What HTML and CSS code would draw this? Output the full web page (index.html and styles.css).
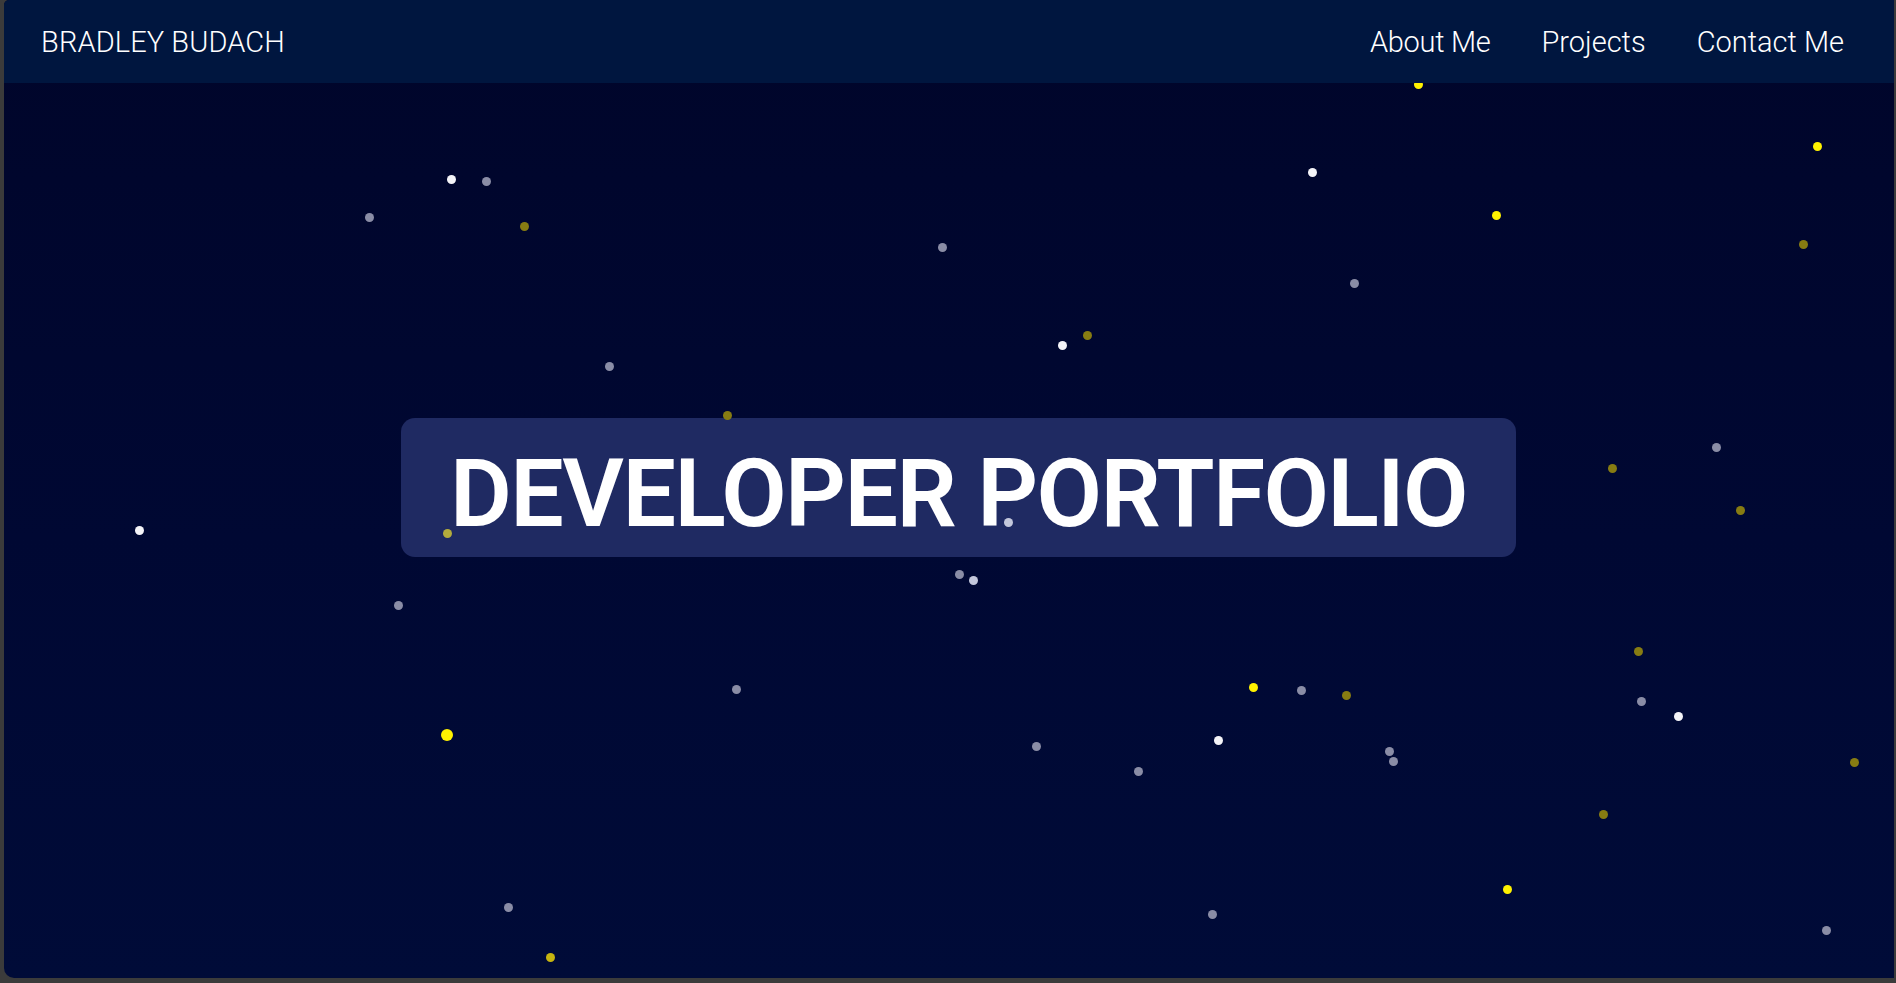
FILE: index.html
```html
<!DOCTYPE html>
<html lang="en">
<head>
<meta charset="utf-8">
<title>Bradley Budach</title>
<link rel="stylesheet" href="styles.css">
</head>
<body>
<div class="frame">
  <header class="topbar">
    <div class="brand">BRADLEY BUDACH</div>
    <nav class="nav">
      <a class="nav-link" href="#about">About Me</a>
      <a class="nav-link" href="#projects">Projects</a>
      <a class="nav-link" href="#contact">Contact Me</a>
    </nav>
  </header>
  <main class="hero">
    <div class="title-box"><h1 class="title">DEVELOPER PORTFOLIO</h1></div>
  </main>
  <div class="sky">
    <span class="star yellow" style="left:1414px;top:84px"></span>
    <span class="star yellow" style="left:1813px;top:146px"></span>
    <span class="star white" style="left:447px;top:179px"></span>
    <span class="star gray" style="left:482px;top:181px"></span>
    <span class="star gray" style="left:365px;top:217px"></span>
    <span class="star olive" style="left:520px;top:226px"></span>
    <span class="star white" style="left:1308px;top:172px"></span>
    <span class="star yellow" style="left:1492px;top:215px"></span>
    <span class="star gray" style="left:938px;top:247px"></span>
    <span class="star olive" style="left:1799px;top:244px"></span>
    <span class="star gray" style="left:1350px;top:283px"></span>
    <span class="star white" style="left:1058px;top:345px"></span>
    <span class="star olive" style="left:1083px;top:335px"></span>
    <span class="star gray" style="left:605px;top:366px"></span>
    <span class="star olive" style="left:723px;top:415px"></span>
    <span class="star gray" style="left:1712px;top:447px"></span>
    <span class="star olive" style="left:1608px;top:468px"></span>
    <span class="star olive" style="left:1736px;top:510px"></span>
    <span class="star white" style="left:135px;top:530px"></span>
    <span class="star khaki" style="left:443px;top:533px"></span>
    <span class="star pale" style="left:1004px;top:522px"></span>
    <span class="star gray" style="left:955px;top:574px"></span>
    <span class="star pale" style="left:969px;top:580px"></span>
    <span class="star gray" style="left:394px;top:605px"></span>
    <span class="star olive" style="left:1634px;top:651px"></span>
    <span class="star gray" style="left:732px;top:689px"></span>
    <span class="star yellow" style="left:1249px;top:687px"></span>
    <span class="star gray" style="left:1297px;top:690px"></span>
    <span class="star olive" style="left:1342px;top:695px"></span>
    <span class="star gray" style="left:1637px;top:701px"></span>
    <span class="star white" style="left:1674px;top:716px"></span>
    <span class="star yellow big" style="left:443px;top:735px"></span>
    <span class="star white" style="left:1214px;top:740px"></span>
    <span class="star gray" style="left:1032px;top:746px"></span>
    <span class="star gray" style="left:1385px;top:751px"></span>
    <span class="star gray" style="left:1389px;top:761px"></span>
    <span class="star gray" style="left:1134px;top:771px"></span>
    <span class="star olive" style="left:1850px;top:762px"></span>
    <span class="star olive" style="left:1599px;top:814px"></span>
    <span class="star yellow" style="left:1503px;top:889px"></span>
    <span class="star gray" style="left:504px;top:907px"></span>
    <span class="star gray" style="left:1208px;top:914px"></span>
    <span class="star gold" style="left:546px;top:957px"></span>
    <span class="star gray" style="left:1822px;top:930px"></span>
  </div>
</div>
</body>
</html>
```

FILE: styles.css
```css
* { box-sizing: border-box; }

html, body {
  margin: 0;
  height: 983px;
  overflow: hidden;
  background: #3b3b3b;
  font-family: Roboto, "Liberation Sans", sans-serif;
}

.frame {
  position: relative;
  margin: 0 2px 0 4px;
  height: 978px;
  border-radius: 5px 0 0 10px;
  overflow: hidden;
  background: linear-gradient(180deg, #00052a 0%, #000833 55%, #000b38 100%);
  display: flex;
  flex-direction: column;
}

.topbar {
  position: relative;
  z-index: 3;
  flex: 0 0 83px;
  background: #00163f;
  display: flex;
  align-items: center;
  justify-content: space-between;
  padding: 0 50px 0 37px;
  color: #ffffff;
}

.brand {
  font-size: 29px;
  font-weight: 300;
  letter-spacing: 0.1px;
}

.nav {
  display: flex;
  gap: 51px;
}

.nav-link {
  color: #ffffff;
  text-decoration: none;
  font-size: 29px;
  font-weight: 300;
}

.nav-link:first-child {
  letter-spacing: -0.3px;
}

.hero {
  position: relative;
  z-index: 1;
  flex: 1;
  display: flex;
  align-items: center;
  justify-content: center;
  padding: 0 0 86px 19px;
}

.title-box {
  width: 1115px;
  height: 139px;
  padding-top: 12px;
  background: #1f2a62;
  border-radius: 14px;
  display: flex;
  align-items: center;
  justify-content: center;
}

.title {
  margin: 0;
  color: #ffffff;
  font-size: 95px;
  font-weight: 600;
  line-height: 1;
  letter-spacing: -1.6px;
  white-space: nowrap;
}

.sky {
  position: absolute;
  inset: 0;
  z-index: 2;
  pointer-events: none;
}

.star {
  position: absolute;
  width: 9px;
  height: 9px;
  margin: -4.5px 0 0 -4.5px;
  border-radius: 50%;
}

.star.big { width: 12px; height: 12px; margin: -6px 0 0 -6px; }
.white { background: #f4f4f8; }
.pale { background: #c4c8dc; }
.gray { background: #8a8da6; }
.yellow { background: #fff200; }
.gold { background: #c6b410; }
.khaki { background: #b4ac3c; }
.olive { background: #877c12; }
```
